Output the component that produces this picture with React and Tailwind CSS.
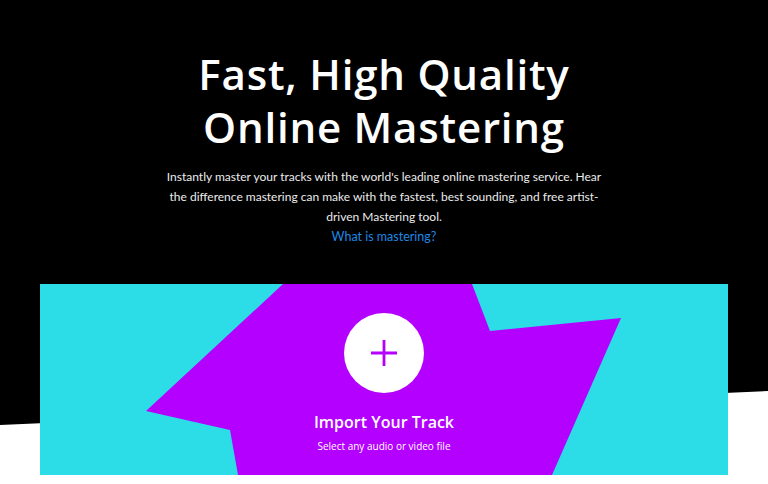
export default function App() {
  return (
    <div className="relative min-h-[484px] overflow-hidden bg-white font-['Open_Sans',sans-serif]">
      <div className="absolute inset-x-0 top-0 h-[425px] bg-black [clip-path:polygon(0_0,100%_0,100%_391px,0_100%)]" />

      <div className="relative flex flex-col items-center pt-[47px]">
        <h1 className="text-center text-[42px] font-semibold leading-[53px] tracking-[0.8px] text-white">
          Fast, High Quality
          <br />
          Online Mastering
        </h1>

        <p className="mt-[14px] max-w-[440px] text-center font-['Lato',sans-serif] text-[12px] leading-[20px] text-[#ececec]">
          Instantly master your tracks with the world's leading online mastering service. Hear the difference mastering can make with the fastest, best sounding, and free artist-driven Mastering tool.
        </p>
        <a href="#" className="font-['Lato',sans-serif] text-[12.5px] leading-[20px] text-[#1e88e5]">
          What is mastering?
        </a>

        <div className="relative mt-[37px] h-[191px] w-[688px] bg-[#2cdde7]">
          <svg className="absolute inset-0 h-full w-full" viewBox="0 0 688 191" preserveAspectRatio="none">
            <polygon
              points="243,0 106,127 190,146 198,191 512,191 581,34 450,47 432,0"
              fill="#b400ff"
            />
          </svg>

          <div className="relative flex flex-col items-center pt-[29px]">
            <button className="flex h-[80px] w-[80px] items-center justify-center rounded-full bg-white">
              <svg width="28" height="28" viewBox="0 0 28 28" fill="none" stroke="#b400ff" strokeWidth="2.8">
                <path d="M14 1v26M1 14h26" />
              </svg>
            </button>
            <div className="mt-[18px] text-[16px] font-semibold leading-[22px] text-white">Import Your Track</div>
            <div className="mt-[6px] text-[10px] leading-[14px] text-white">Select any audio or video file</div>
          </div>
        </div>
      </div>
    </div>
  );
}
